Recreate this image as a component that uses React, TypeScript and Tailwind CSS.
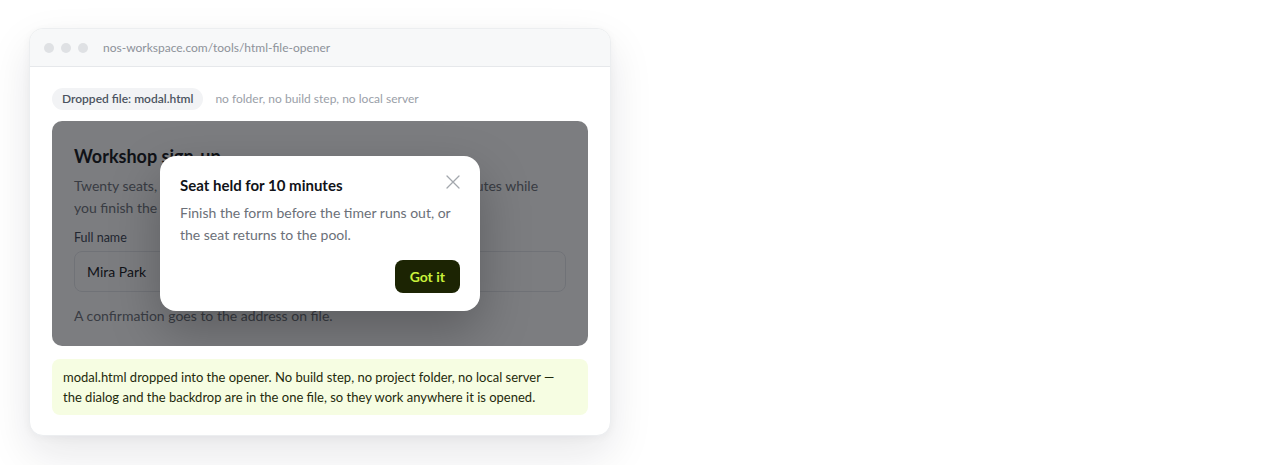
function TitleBar() {
  return (
    <div className="flex h-[38px] items-center border-b border-[#e6e8eb] bg-[#f7f8f9] px-[14px]">
      <div className="flex gap-[7px]">
        <span className="h-[10px] w-[10px] rounded-full bg-[#dfe1e4]" />
        <span className="h-[10px] w-[10px] rounded-full bg-[#dfe1e4]" />
        <span className="h-[10px] w-[10px] rounded-full bg-[#dfe1e4]" />
      </div>
      <span className="ml-[15px] text-[12px] text-[#8d929a]">
        nos-workspace.com/tools/html-file-opener
      </span>
    </div>
  );
}

function Dialog() {
  return (
    <div className="relative w-[320px] rounded-[16px] bg-white px-[20px] pt-[19px] pb-[18px] shadow-[0_20px_50px_rgba(0,0,0,0.25)]">
      <button className="absolute top-[19px] right-[20px] text-[#a3a7ad]">
        <svg width="14" height="14" viewBox="0 0 14 14" fill="none">
          <path
            d="M1 1L13 13M13 1L1 13"
            stroke="currentColor"
            strokeWidth="1.3"
            strokeLinecap="round"
          />
        </svg>
      </button>
      <h3 className="text-[15px] leading-[20px] font-bold text-[#111318]">
        Seat held for 10 minutes
      </h3>
      <p className="mt-[7px] text-[14px] leading-[22px] text-[#6b7078]">
        Finish the form before the timer runs out, or the seat returns to the
        pool.
      </p>
      <div className="mt-[14px] flex justify-end">
        <button className="h-[33px] rounded-[8px] bg-[#1c2403] px-[15px] text-[14px] font-bold text-[#c9f03b]">
          Got it
        </button>
      </div>
    </div>
  );
}

function Preview() {
  return (
    <div className="relative mt-[11px] h-[225px] overflow-hidden rounded-[10px] bg-white">
      <div className="px-[22px] pt-[22px]">
        <h2 className="text-[18px] leading-[26px] font-bold text-[#111318]">
          Workshop sign-up
        </h2>
        <p className="mt-[6px] text-[14px] leading-[22px] text-[#6b7078]">
          Twenty seats, claimed in order. Your place is being held for 10 minutes while
          <br />
          you finish the form.
        </p>
        <div className="mt-[11px] text-[12.5px] leading-[16px] text-[#374151]">
          Full name
        </div>
        <div className="mt-[5px] flex h-[41px] items-center rounded-[8px] border border-[#e5e7eb] px-[12px] text-[14px] text-[#111318]">
          Mira Park
        </div>
        <p className="mt-[13px] text-[14px] leading-[22px] text-[#6b7078]">
          A confirmation goes to the address on file.
        </p>
      </div>
      <div className="absolute inset-0 flex items-center justify-center bg-[#111318]/55">
        <Dialog />
      </div>
    </div>
  );
}

export default function App() {
  return (
    <div
      className="h-[465px] w-full bg-white pt-[28px] pl-[29px]"
      style={{ fontFamily: '"Segoe UI", Lato, "Open Sans", sans-serif' }}
    >
      <div className="w-[582px] overflow-hidden rounded-[14px] border border-[#eceef0] bg-white shadow-[0_18px_44px_rgba(15,23,42,0.10),0_2px_8px_rgba(15,23,42,0.04)]">
        <TitleBar />
        <div className="px-[22px] pt-[21px] pb-[20px]">
          <div className="flex items-center">
            <span className="rounded-full bg-[#f2f3f5] px-[10px] text-[12px] leading-[22px] font-semibold text-[#4b5360]">
              Dropped file: modal.html
            </span>
            <span className="ml-[12px] text-[12px] text-[#9aa0a8]">
              no folder, no build step, no local server
            </span>
          </div>
          <Preview />
          <div className="mt-[13px] rounded-[8px] bg-[#f6fde2] px-[11px] py-[8px] text-[13px] leading-[20px] text-[#1f2a0c]">
            modal.html dropped into the opener. No build step, no project
            folder, no local server —
            <br />
            the dialog and the backdrop are in the one file, so they work
            anywhere it is opened.
          </div>
        </div>
      </div>
    </div>
  );
}
